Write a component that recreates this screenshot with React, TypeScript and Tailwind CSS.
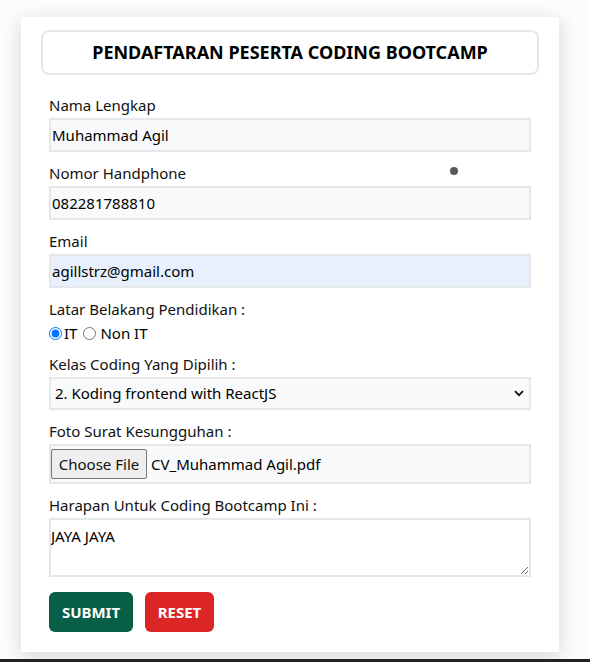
import React from "react";

const font = { fontFamily: '"Noto Sans", "Open Sans", sans-serif' };

const Field: React.FC<{ label: string; children: React.ReactNode }> = ({ label, children }) => (
  <div className="flex flex-col">
    <label className="block text-[15px] leading-[20px] text-[#111] mb-[3px]">{label}</label>
    {children}
  </div>
);

export default function App() {
  return (
    <div className="relative flex h-[662px] w-[590px] flex-col bg-[#fcfcfc]" style={font}>
      <div className="flex-1 pl-[21px] pr-[31px] pt-[17px]">
        <div className="flex h-[635px] flex-col bg-white px-[20px] pt-[13px] shadow-[0_4px_18px_rgba(0,0,0,0.16)]">
          <div className="flex h-[45px] items-center justify-center rounded-[8px] border-2 border-[#e5e7eb]">
            <h1 className="text-[18px] font-bold text-black">PENDAFTARAN PESERTA CODING BOOTCAMP</h1>
          </div>

          <form className="flex flex-col gap-[11px] px-[8px] pt-[20px]">
            <Field label="Nama Lengkap">
              <input
                defaultValue="Muhammad Agil"
                className="h-[34px] w-full border-2 border-[#e5e7eb] bg-[#f9fafb] px-[1px] text-[15px] text-black outline-none"
              />
            </Field>
            <Field label="Nomor Handphone">
              <input
                defaultValue="082281788810"
                className="h-[34px] w-full border-2 border-[#e5e7eb] bg-[#f9fafb] px-[1px] text-[15px] text-black outline-none"
              />
            </Field>
            <Field label="Email">
              <input
                defaultValue="agillstrz@gmail.com"
                className="h-[34px] w-full border-2 border-[#e5e7eb] bg-[#e8f0fe] px-[1px] text-[15px] text-black outline-none"
              />
            </Field>
            <div className="flex flex-col">
              <label className="block text-[15px] leading-[20px] text-[#111]">Latar Belakang Pendidikan :</label>
              <div className="mt-[4px] flex h-[20px] items-center text-[15px] text-black">
                <input type="radio" name="edu" defaultChecked className="m-0 h-[13px] w-[13px]" />
                <span className="ml-[2px] mr-[6px]">IT</span>
                <input type="radio" name="edu" className="m-0 h-[13px] w-[13px]" />
                <span className="ml-[4px]">Non IT</span>
              </div>
            </div>
            <Field label="Kelas Coding Yang Dipilih :">
              <div className="relative flex h-[33px] items-center border-2 border-[#e5e7eb] bg-[#f9fafb] pl-[4px] text-[15px] text-black">
                <span>2. Koding frontend with ReactJS</span>
                <svg className="absolute right-[5px] top-[11px]" width="10" height="7" viewBox="0 0 10 7">
                  <path d="M1 1.2 5 5.2 9 1.2" fill="none" stroke="#111" strokeWidth="1.8" />
                </svg>
              </div>
            </Field>
            <Field label="Foto Surat Kesungguhan :">
              <div className="flex h-[40px] items-center border-2 border-[#e5e7eb] bg-[#f9fafb] text-[15px] text-black">
                <button
                  type="button"
                  className="h-[30px] w-[96px] rounded-[2px] border border-[#767676] bg-[#efefef] text-[15px] text-[#111]"
                >
                  Choose File
                </button>
                <span className="ml-[4px]">CV_Muhammad Agil.pdf</span>
              </div>
            </Field>
            <Field label="Harapan Untuk Coding Bootcamp Ini :">
              <textarea
                defaultValue="JAYA JAYA"
                className="h-[59px] w-full border-2 border-[#e5e7eb] bg-white px-0 pt-[6px] text-[15px] leading-[20px] text-black outline-none"
              />
            </Field>
            <div className="mt-[4px] flex gap-[12px]">
              <button type="button" className="h-[40px] w-[84px] rounded-[6px] bg-[#065f46] text-[15px] font-bold text-white">
                SUBMIT
              </button>
              <button type="button" className="h-[40px] w-[69px] rounded-[6px] bg-[#dc2626] text-[15px] font-bold text-white">
                RESET
              </button>
            </div>
          </form>
        </div>
      </div>
      <div className="h-[3px] w-full bg-[#222]" />
      <div className="absolute left-[450px] top-[167px] h-[8px] w-[8px] rounded-full bg-[#555a5f]" />
    </div>
  );
}
